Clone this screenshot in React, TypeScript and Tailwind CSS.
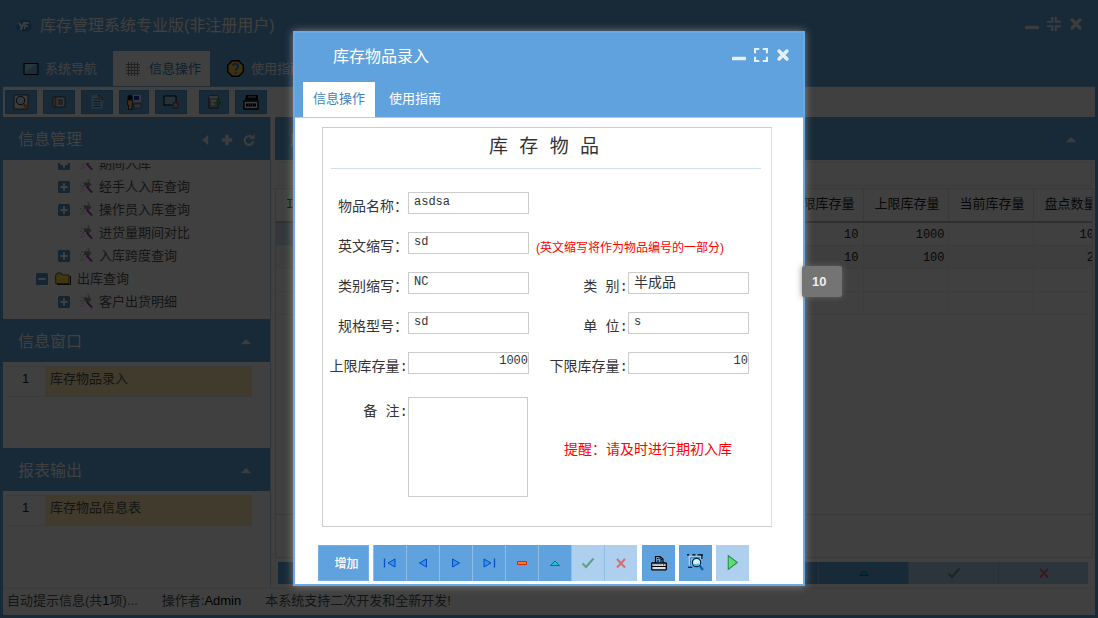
import { ReactNode } from "react";
import { clsx } from "clsx";

const songFont = "font-['Liberation_Mono','Noto_Sans_CJK_SC',monospace]";

type TTreeItem = { title: string; open?: boolean; leaf?: boolean; folder?: boolean };

const treeItems: TTreeItem[] = [
  { title: "期间入库" },
  { title: "经手人入库查询" },
  { title: "操作员入库查询" },
  { title: "进货量期间对比", leaf: true },
  { title: "入库跨度查询" },
  { title: "出库查询", open: true, folder: true },
  { title: "客户出货明细" },
];

const rows = [
  { low: "10", high: "1000", count: "10" },
  { low: "10", high: "100", count: "2" },
  { low: "", high: "", count: "" },
  { low: "", high: "", count: "" },
];

const Icon = ({ children, size = "size-4" }: { children: ReactNode; size?: string }) => (
  <svg viewBox="0 0 16 16" className={clsx("shrink-0", size)} aria-hidden="true">
    {children}
  </svg>
);

const LogoIcon = () => (
  <Icon>
    <path d="M1 11.500c-1.500-3 0-5.500 2.500-5.500C4 2 7 .5 10 2c3-.500 4.500 2 4 4 2.500 1.500 2 5-.500 6.500l-4 1.500z" fill="#2c8fcb" />
    <path d="M3 5l2.500 4M8.500 4L4.500 12" stroke="#fff" strokeWidth="1.800" fill="none" />
    <path d="M13 5h-3.500l-1 6M9 8h3" stroke="#fff" strokeWidth="1.300" fill="none" />
  </Icon>
);

const ScreenIcon = () => (
  <Icon>
    <rect x="1" y="2.500" width="14" height="11" fill="#6cb2de" stroke="#000" />
    <path d="M2 3h12L2 11z" fill="#a9d7f0" />
  </Icon>
);

const GridIcon = () => (
  <Icon>
    <path d="M1 3.500h14M1 6.500h14M1 9.500h14M1 12.500h14M3.500 1v14M6.500 1v14M9.500 1v14M12.500 1v14" stroke="#888" fill="none" />
  </Icon>
);

const HelpIcon = () => (
  <Icon size="size-[17px]">
    <path d="M5 .7h6L15.300 5v6L11 15.300H5L.7 11V5z" fill="#ffc03a" stroke="#000" strokeWidth="1.300" />
    <path d="M5.500 5.500C6 3 10.500 3 10.500 6c0 1.800-2.500 2-2.500 4" fill="none" stroke="#2f86e0" strokeWidth="2" />
    <rect x="7" y="11.200" width="2" height="2" fill="#2f86e0" />
  </Icon>
);

const SearchPageIcon = () => (
  <Icon>
    <path d="M1 1h14v14H1z" fill="#eeeade" stroke="#333" strokeWidth=".8" />
    <path d="M10.500 10l4.500 4.500" stroke="#e0783a" strokeWidth="2.800" />
    <circle cx="7.500" cy="6.500" r="4.200" fill="#b6f0ff" stroke="#222" />
  </Icon>
);

const FormIcon = () => (
  <Icon>
    <path d="M2 3h12v10H2z" fill="#d7e4ee" stroke="#444" />
    <path d="M4.500 3v10" stroke="#b06a44" strokeWidth="2" />
    <path d="M7 6h5M7 8h5M7 10h5" stroke="#234" />
  </Icon>
);

const PageIcon = () => (
  <Icon>
    <path d="M2.500 1h8L14 4.500V15H2.500z" fill="#9dd2f5" stroke="#7db9e2" strokeWidth=".7" />
    <path d="M10 1l4 4h-4z" fill="#f5fbff" stroke="#222" strokeWidth=".8" />
    <path d="M4.500 5h4M4.500 7.500h7M4.500 10h7M4.500 12.500h7" stroke="#2f6f9e" />
  </Icon>
);

const UserIcon = () => (
  <Icon>
    <rect x="7" y="1" width="8" height="7" fill="#ddd" />
    <rect x="8" y="2" width="5" height="4" fill="#2233d0" />
    <path d="M8 10h7v4H8z" fill="#ccc" stroke="#333" strokeWidth=".6" />
    <circle cx="4" cy="3.500" r="2.500" fill="#000" />
    <path d="M1.500 6h5v5H6v4.500H2.500V11h-1z" fill="#f4bd62" stroke="#000" strokeWidth=".7" />
  </Icon>
);

const ScreenBallIcon = () => (
  <Icon>
    <rect x="1" y="2" width="12" height="9" fill="#8accf0" stroke="#000" />
    <circle cx="12.500" cy="11.500" r="2.800" fill="#75d474" stroke="#8b3c9c" strokeWidth="1.300" />
    <path d="M12.500 9v2.500H15" stroke="#f0a32c" strokeWidth="1.400" fill="none" />
  </Icon>
);

const ExportIcon = () => (
  <Icon>
    <path d="M3 2h9v12H3z" fill="#a0a9af" stroke="#333" />
    <path d="M3 3h9M5 7h5M5 10h4" stroke="#fff" strokeWidth="1.500" />
    <path d="M8 9h4M12.500 6.500L15 9l-2.500 2.500z" stroke="#25b03f" fill="#25b03f" />
  </Icon>
);

const DeviceIcon = () => (
  <Icon>
    <path d="M3 1h12v5H2z" fill="#000" />
    <path d="M5 3h8" stroke="#ddd" />
    <path d="M1 7h14v8H1z" fill="#eee" stroke="#000" strokeWidth="1.400" />
    <path d="M3 9.500h10v3H3z" fill="#000" />
    <path d="M5 11h6" stroke="#ccc" strokeDasharray="1 1" />
  </Icon>
);

const WandIcon = () => (
  <Icon size="size-[15px]">
    <path d="M6 3l2 1 3-2 1 3-3 3-4-1z" fill="#999" />
    <path d="M1 7h1M3 10h1M2 13h1M5 12h1M3 4h1M9 1h2M4 8h1" stroke="#777" />
    <path d="M6 4l4 4 3-3" stroke="#888" strokeWidth="1.400" fill="none" />
    <path d="M8 8l6 6.500" stroke="#b12fc2" strokeWidth="2" />
  </Icon>
);

const FolderIcon = () => (
  <Icon>
    <path d="M.7 12.500V4l1.500-2h4l1.300 2H14v8.500z" fill="#ffdc45" stroke="#6d5514" />
    <path d="M15.500 5v8.500H2" stroke="#222" fill="none" />
    <path d="M2 6h11" stroke="#fff3a6" />
  </Icon>
);

const BoxToggle = ({ open }: { open?: boolean }) => (
  <Icon size="size-3">
    <rect width="16" height="16" rx="2" fill="#4f92cb" />
    <path d={open ? "M3 8h10" : "M3 8h10M8 3v10"} stroke="#fff" strokeWidth="2.600" />
  </Icon>
);

const CaretUp = () => (
  <Icon size="size-3">
    <path d="M1 11l7-7 7 7z" fill="#e8edf2" />
  </Icon>
);

const WindowButtons = ({ full }: { full?: boolean }) => (
  <div className="flex items-center gap-2 text-[#e6eef6]">
    <button type="button" aria-label="最小化">
      <Icon size="size-[14px]">
        <rect x="0" y="10" width="16" height="4" rx="1" fill="currentColor" />
      </Icon>
    </button>
    <button type="button" aria-label={full ? "还原" : "最大化"}>
      <Icon size="size-[14px]">
        <path
          d={full ? "M6 0v5.500H0M10 0v5.500h6M6 16v-5.500H0M10 16v-5.500h6" : "M1.200 6V1.200H6M10 1.200h4.800V6M1.200 10v4.800H6M14.800 10v4.800H10"}
          stroke="currentColor"
          strokeWidth="2.400"
          fill="none"
        />
      </Icon>
    </button>
    <button type="button" aria-label="关闭">
      <Icon size="size-[14px]">
        <path d="M3.500 3.500l9 9M12.500 3.500l-9 9" stroke="currentColor" strokeWidth="4" strokeLinecap="round" />
      </Icon>
    </button>
  </div>
);

const navIcons: { label: string; icon: ReactNode; disabled?: boolean }[] = [
  { label: "首条", icon: <><path d="M2.500 3.500v9" stroke="#0d52c4" strokeWidth="1.300" /><path d="M13 4v8L6 8z" fill="#2b94f5" stroke="#0b49b8" /></> },
  { label: "上一条", icon: <path d="M11.500 4v8L4.500 8z" fill="#2b94f5" stroke="#0b49b8" /> },
  { label: "下一条", icon: <path d="M4.500 4v8l7-4z" fill="#2b94f5" stroke="#0b49b8" /> },
  { label: "末条", icon: <><path d="M13.500 3.500v9" stroke="#0d52c4" strokeWidth="1.300" /><path d="M3 4v8l7-4z" fill="#2b94f5" stroke="#0b49b8" /></> },
  { label: "删除", icon: <path d="M3.500 6.500h9v3h-9z" fill="#ff7a2a" stroke="#d42a0a" /> },
  { label: "编辑", icon: <path d="M3.500 10.500h9L8 6z" fill="#1fc6cf" stroke="#08727e" /> },
  { label: "保存", icon: <path d="M2.500 8.500L6 12l7.500-8.500" stroke="#5aa18a" strokeWidth="2" fill="none" />, disabled: true },
  { label: "取消", icon: <path d="M4 4l8 8.500M12 4l-8 8.500" stroke="#d56d74" strokeWidth="2" fill="none" />, disabled: true },
];

const NavBar = ({ className }: { className?: string }) => (
  <div className={clsx("grid grid-cols-8", className)}>
    {navIcons.map((item) => (
      <button
        key={item.label}
        type="button"
        aria-label={item.label}
        disabled={item.disabled}
        className={clsx("flex items-center justify-center border-l border-[#8fbde6]", item.disabled ? "bg-[#aecfee]" : "bg-[#5fa2dd]")}
      >
        <Icon>{item.icon}</Icon>
      </button>
    ))}
  </div>
);

const ToolButton = ({ label, className, children }: { label: string; className?: string; children: ReactNode }) => (
  <button
    type="button"
    aria-label={label}
    className={clsx("flex h-6 items-center justify-center border border-[#5596cf] bg-[#5fa2dd]", className ?? "w-8")}
  >
    {children}
  </button>
);

const PanelHead = ({ title, children }: { title: string; children: ReactNode }) => (
  <div className="flex h-[43px] shrink-0 items-center justify-between bg-[#5fa2dd] pt-[2px] pr-[18px] pl-[15px] text-white">
    <h2 className="text-base">{title}</h2>
    {children}
  </div>
);

const ListRow = ({ title }: { title: string }) => (
  <div className="mt-1 mr-[18px] ml-[3px] flex h-[31px] border-y border-[#ececec] leading-6">
    <span className="w-[39px] text-center">1</span>
    <a href="#" className="flex-1 bg-[#ffe9b0] pl-[5px] text-[#555]">{title}</a>
  </div>
);

const Sidebar = () => (
  <aside className="flex w-[268px] shrink-0 flex-col border-r border-[#bcd8f0] text-[13px]">
    <PanelHead title="信息管理">
      <div className="-mr-1 flex items-center gap-2 text-[#e8edf2]">
        <Icon size="size-3">
          <path d="M11 1v14L3 8z" fill="currentColor" />
        </Icon>
        <Icon size="size-[14px]">
          <path d="M8 2v12M2 8h12" stroke="currentColor" strokeWidth="4" />
        </Icon>
        <Icon size="size-[14px]">
          <path d="M13 9.500A5 5 0 1 1 11 4.500" stroke="currentColor" strokeWidth="2.600" fill="none" />
          <path d="M14.500 1v6h-6z" fill="currentColor" />
        </Icon>
      </div>
    </PanelHead>
    <ul className="mt-[3px] flex min-h-0 flex-1 flex-col justify-end overflow-hidden pb-[6px] text-[#555]">
      {treeItems.map((item) => (
        <li key={item.title} className={clsx("flex h-[23px] shrink-0 items-center", item.folder ? "gap-[7px] pl-[33px]" : "gap-[9px] pl-[55px]")}>
          {item.leaf ? <span className="w-3" /> : <BoxToggle open={item.open} />}
          {item.folder ? <FolderIcon /> : <WandIcon />}
          <a href="#" className={item.folder ? "-ml-px" : "-ml-1"}>{item.title}</a>
        </li>
      ))}
    </ul>
    <PanelHead title="信息窗口"><CaretUp /></PanelHead>
    <div className="h-[86px] shrink-0">
      <ListRow title="库存物品录入" />
    </div>
    <PanelHead title="报表输出"><CaretUp /></PanelHead>
    <div className="h-[97px] shrink-0">
      <ListRow title="库存物品信息表" />
    </div>
  </aside>
);

const StockPanel = () => (
  <section className="flex min-w-0 flex-1 flex-col">
    <PanelHead title="库存物品录入"><CaretUp /></PanelHead>
    <div className="flex h-7 items-center px-[3px]">
      <div className="h-6 flex-1 border border-[#ececec]" />
    </div>
    <div className="mr-[2px] min-h-0 flex-1 overflow-hidden border border-[#ddd]">
      <table className={clsx("w-[calc(100%+5px)] table-fixed border-collapse text-[#222]", songFont)}>
        <thead>
          <tr className="h-[33px] border-b-2 border-[#bbb] text-left text-[13px]">
            <th className="border-r border-[#e4e4e4] pl-[10px] font-normal">ID</th>
            <th className="w-[85px] border-r border-[#e4e4e4] pl-[11px] font-normal">下限库存量</th>
            <th className="w-[85px] border-r border-[#e4e4e4] pl-[11px] font-normal">上限库存量</th>
            <th className="w-[85px] border-r border-[#e4e4e4] pl-[11px] font-normal">当前库存量</th>
            <th className="w-[64px] pl-[11px] font-normal whitespace-nowrap">盘点数量</th>
          </tr>
        </thead>
        <tbody>
          {rows.map((row, index) => (
            <tr key={index} className={clsx("h-[23px] border-b border-[#ededed] text-right text-xs", index === 1 && "bg-[#f5f5f5]")}>
              <td className={clsx("border-r border-[#eee]", index === 0 && "bg-[#cfdcf5]")} />
              <td className="border-r border-[#eee] pt-[3px] pr-1">{row.low}</td>
              <td className="border-r border-[#eee] pt-[3px] pr-[3px]">{row.high}</td>
              <td className="border-r border-[#eee]" />
              <td className="pt-[3px] pr-[3px]">{row.count}</td>
            </tr>
          ))}
        </tbody>
      </table>
    </div>
    <div className="mr-[2px] h-[43px] border border-t-0 border-[#ddd]" />
    <div className="mt-1 mr-[7px] mb-1 ml-[3px] flex h-[22px]">
      <div className="flex-1 bg-[#5fa2dd]" />
      <NavBar className="h-[22px] w-[720px]" />
    </div>
  </section>
);

type TFieldProps = { id: string; label: string; value: string; number?: boolean };

const Field = ({ id, label, value, number }: TFieldProps) => (
  <>
    <label htmlFor={id} className="pt-[5px] text-right leading-5 whitespace-pre">{label}</label>
    <input
      id={id}
      defaultValue={value}
      className={clsx(
        "h-[22px] w-full border border-[#ccc] bg-white",
        number ? "pb-[3px] text-right text-xs" : "pl-[5px]",
        /[a-z]/i.test(value) ? "pb-px text-xs" : !number && "pb-[3px] text-sm"
      )}
    />
  </>
);

const fieldRow = "grid h-10 grid-cols-[85px_121px_99px_121px] items-start";

const StockForm = () => (
  <form className={clsx("mr-[31px] ml-[27px] mt-[9px] h-[400px] border border-[#ccc] border-r-[#e0e0e0] text-sm text-[#333]", songFont)}>
    <h1 className="mr-[10px] ml-2 h-[41px] border-b border-[#cfe0ef] pr-1 text-center text-[19px] leading-10">库 存 物 品</h1>
    <div className="mt-[23px]">
      <div className={fieldRow}>
        <Field id="name" label="物品名称：" value="asdsa" />
      </div>
      <div className={fieldRow}>
        <Field id="short" label="英文缩写：" value="sd" />
        <p className="col-span-2 pt-[6px] pl-[7px] font-['Liberation_Sans','Noto_Sans_CJK_SC',sans-serif] text-xs leading-5 whitespace-nowrap text-[#f00]">
          (英文缩写将作为物品编号的一部分)
        </p>
      </div>
      <div className={fieldRow}>
        <Field id="kindShort" label="类别缩写：" value="NC" />
        <Field id="kind" label="类 别:" value="半成品" />
      </div>
      <div className={fieldRow}>
        <Field id="model" label="规格型号：" value="sd" />
        <Field id="unit" label="单 位:" value="s" />
      </div>
      <div className={fieldRow}>
        <Field id="high" label="上限库存量:" value="1000" number />
        <Field id="low" label="下限库存量:" value="10" number />
      </div>
      <div className="mt-[5px] grid grid-cols-[85px_120px_1fr] items-start">
        <label htmlFor="note" className="pt-[5px] text-right leading-5">备 注:</label>
        <textarea id="note" className="h-[100px] w-full resize-none border border-[#ccc]" />
        <p className="pt-[43px] pl-9 leading-5 whitespace-nowrap text-[#f00]">提醒：请及时进行期初入库</p>
      </div>
    </div>
  </form>
);

const PrintIcon = () => (
  <Icon>
    <path d="M4.500 8V1.500H9L12 4v4" fill="none" stroke="#000" strokeWidth="1.200" />
    <path d="M6 3.500h1.500M9 2v2.500h2.500M6 6h5" stroke="#000" strokeDasharray="2 1" fill="none" />
    <rect x=".7" y="8" width="14.600" height="6.800" rx=".5" fill="#ddd" stroke="#000" strokeWidth="1.300" />
    <path d="M1 11.500h14" stroke="#000" />
    <path d="M2 9.700h9" stroke="#9cb8d0" strokeWidth="1.400" />
    <rect x="12" y="9" width="1.300" height="1.300" fill="#e00" />
  </Icon>
);

const PreviewIcon = () => (
  <Icon size="size-[17px]">
    <path d="M1.500 1.500h12v9h-12z" fill="#9fd0f2" />
    <path d="M3.500 3.500h9M3.500 3.500v7" stroke="#2670ab" fill="none" />
    <path d="M0 .8h2M5 .8h3M10 .8h5M14 .8v4M1 12.500h4" stroke="#000" fill="none" />
    <circle cx="9" cy="8" r="3.900" fill="#d5f7ff" stroke="#0a2540" strokeWidth="1.200" />
    <path d="M7 9.500c1 1.500 3 1.200 4-.5" stroke="#2bb3ec" strokeWidth="1.500" fill="none" />
    <path d="M12 11l3 4" stroke="#0e62a8" strokeWidth="2.200" />
  </Icon>
);

const StockDialog = () => (
  <div role="dialog" aria-label="库存物品录入" className="relative w-[512px] border-2 border-[#6aaae4] bg-white shadow-[0_0_8px_rgba(190,190,190,0.6)]">
    <header className="border-b border-[#a9cdee] bg-[#5fa2dd] text-white">
      <div className="flex h-[49px] items-center justify-between pr-[13px] pl-[38px]">
        <h2 className="text-base">库存物品录入</h2>
        <div className="-mt-1"><WindowButtons /></div>
      </div>
      <nav className="flex h-[35px] pl-2 text-[13px]">
        <button type="button" className="bg-white px-[10px] text-[#4282b8]">信息操作</button>
        <button type="button" className="px-[14px]">使用指南</button>
      </nav>
    </header>
    <StockForm />
    <footer className="mt-[18px] mb-[3px] flex h-9 gap-1 pl-[23px]">
      <button type="button" className="w-[51px] border border-[#76b0e2] bg-[#5fa2dd] pt-[2px] pl-[6px] text-xs font-medium text-white">增加</button>
      <NavBar className="w-[264px]" />
      <button type="button" aria-label="打印" className="ml-px flex w-[33px] items-center justify-center bg-[#5fa2dd]"><PrintIcon /></button>
      <button type="button" aria-label="预览" className="flex w-[33px] items-center justify-center bg-[#5fa2dd]"><PreviewIcon /></button>
      <button type="button" aria-label="运行" className="flex w-[33px] items-center justify-center bg-[#aecfee]">
        <Icon size="size-[17px]">
          <path d="M4 1.500v13L12.500 8z" fill="#57e36a" stroke="#2d8a57" />
        </Icon>
      </button>
    </footer>
    <div role="tooltip" className="absolute top-[233px] left-[507px] h-[31px] w-10 rounded-xs bg-[#747474] pl-[10px] font-['Liberation_Sans',sans-serif] text-[13px] leading-8 font-bold text-[#eee] shadow-[0_0_6px_rgba(110,110,110,0.8)]">
      10
    </div>
  </div>
);

const App = () => {
  return (
    <div className="relative h-screen overflow-hidden bg-white font-['Liberation_Sans','Noto_Sans_CJK_SC',sans-serif] text-[#222]">
      <div className="flex h-full flex-col border-x-[3px] border-b-[3px] border-[#5fa2dd]">
        <header className="shrink-0 border-b border-[#7db3e2] bg-[#5fa2dd] text-white">
          <div className="flex h-[51px] items-center justify-between pr-3 pl-[13px]">
            <div className="flex items-center gap-2">
              <LogoIcon />
              <h1 className="text-base">库存管理系统专业版(非注册用户)</h1>
            </div>
            <div className="-mt-1"><WindowButtons full /></div>
          </div>
          <nav className="flex h-[35px] text-[13px]">
            <button type="button" className="flex items-center gap-[6px] pr-4 pl-5"><ScreenIcon />系统导航</button>
            <button type="button" className="flex items-center gap-2 bg-white pr-[9px] pl-3 text-[#4282b8]"><GridIcon />信息操作</button>
            <button type="button" className="flex items-center gap-[7px] pl-[17px]"><HelpIcon />使用指南</button>
          </nav>
        </header>
        <div className="flex h-[30px] shrink-0 items-center gap-[6px] pl-[2px]">
          <ToolButton label="查询"><SearchPageIcon /></ToolButton>
          <ToolButton label="表单"><FormIcon /></ToolButton>
          <ToolButton label="文档"><PageIcon /></ToolButton>
          <ToolButton label="用户" className="w-[30px]"><UserIcon /></ToolButton>
          <ToolButton label="桌面"><ScreenBallIcon /></ToolButton>
          <ToolButton label="导出" className="ml-[6px] w-[30px]"><ExportIcon /></ToolButton>
          <ToolButton label="设备"><DeviceIcon /></ToolButton>
        </div>
        <main className="flex min-h-0 flex-1 gap-1">
          <Sidebar />
          <StockPanel />
        </main>
        <footer className="flex h-[27px] shrink-0 items-center gap-6 border-t border-[#eee] pb-[2px] pl-1 text-[13px] text-[#555]">
          <span>自动提示信息(共<span className="text-black">1</span>项)...</span>
          <span>操作者:<span className="text-black">Admin</span></span>
          <span>本系统支持二次开发和全新开发!</span>
        </footer>
      </div>
      <div className="absolute inset-0 flex items-center justify-center bg-black/75 pb-[2px]">
        <StockDialog />
      </div>
    </div>
  );
};

export default App;
